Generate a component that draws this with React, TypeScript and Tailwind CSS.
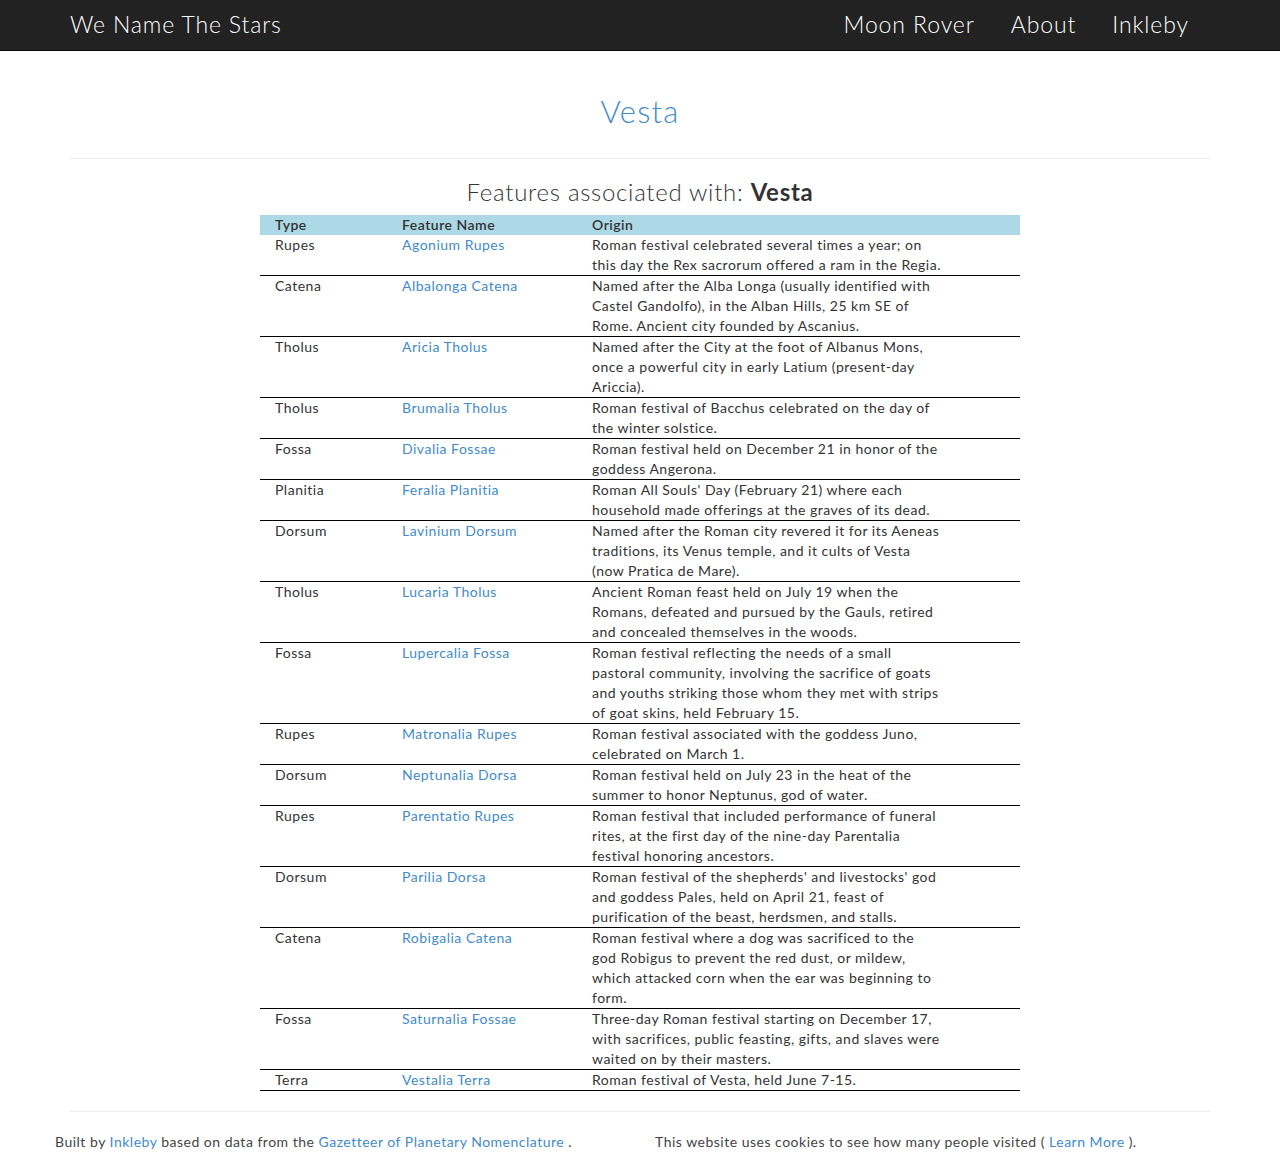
import React from "react";

type Row = { type: string; name: string; lines: string[] };

const rows: Row[] = [
  { type: "Rupes", name: "Agonium Rupes", lines: ["Roman festival celebrated several times a year; on", "this day the Rex sacrorum offered a ram in the Regia."] },
  { type: "Catena", name: "Albalonga Catena", lines: ["Named after the Alba Longa (usually identified with", "Castel Gandolfo), in the Alban Hills, 25 km SE of", "Rome. Ancient city founded by Ascanius."] },
  { type: "Tholus", name: "Aricia Tholus", lines: ["Named after the City at the foot of Albanus Mons,", "once a powerful city in early Latium (present-day", "Ariccia)."] },
  { type: "Tholus", name: "Brumalia Tholus", lines: ["Roman festival of Bacchus celebrated on the day of", "the winter solstice."] },
  { type: "Fossa", name: "Divalia Fossae", lines: ["Roman festival held on December 21 in honor of the", "goddess Angerona."] },
  { type: "Planitia", name: "Feralia Planitia", lines: ["Roman All Souls' Day (February 21) where each", "household made offerings at the graves of its dead."] },
  { type: "Dorsum", name: "Lavinium Dorsum", lines: ["Named after the Roman city revered it for its Aeneas", "traditions, its Venus temple, and it cults of Vesta", "(now Pratica de Mare)."] },
  { type: "Tholus", name: "Lucaria Tholus", lines: ["Ancient Roman feast held on July 19 when the", "Romans, defeated and pursued by the Gauls, retired", "and concealed themselves in the woods."] },
  { type: "Fossa", name: "Lupercalia Fossa", lines: ["Roman festival reflecting the needs of a small", "pastoral community, involving the sacrifice of goats", "and youths striking those whom they met with strips", "of goat skins, held February 15."] },
  { type: "Rupes", name: "Matronalia Rupes", lines: ["Roman festival associated with the goddess Juno,", "celebrated on March 1."] },
  { type: "Dorsum", name: "Neptunalia Dorsa", lines: ["Roman festival held on July 23 in the heat of the", "summer to honor Neptunus, god of water."] },
  { type: "Rupes", name: "Parentatio Rupes", lines: ["Roman festival that included performance of funeral", "rites, at the first day of the nine-day Parentalia", "festival honoring ancestors."] },
  { type: "Dorsum", name: "Parilia Dorsa", lines: ["Roman festival of the shepherds' and livestocks' god", "and goddess Pales, held on April 21, feast of", "purification of the beast, herdsmen, and stalls."] },
  { type: "Catena", name: "Robigalia Catena", lines: ["Roman festival where a dog was sacrificed to the", "god Robigus to prevent the red dust, or mildew,", "which attacked corn when the ear was beginning to", "form."] },
  { type: "Fossa", name: "Saturnalia Fossae", lines: ["Three-day Roman festival starting on December 17,", "with sacrifices, public feasting, gifts, and slaves were", "waited on by their masters."] },
  { type: "Terra", name: "Vestalia Terra", lines: ["Roman festival of Vesta, held June 7-15."] },
];

export default function App() {
  return (
    <div className="min-h-[1172px] bg-white text-[#333] text-[14px] leading-[20px] tracking-[0.5px]" style={{ fontFamily: "Lato, 'Open Sans', sans-serif" }}>
      <nav className="h-[51px] bg-[#222] border-b border-[#080808]">
        <div className="w-[1140px] mx-auto h-[50px] flex items-center justify-between">
          <a className="text-white text-[23px] font-light tracking-[0.85px] pb-[2px]">We Name The Stars</a>
          <div className="flex items-center gap-[36px] pr-[21px] pb-[2px] text-white text-[23px] font-light tracking-[0.9px]">
            <a>Moon Rover</a>
            <a>About</a>
            <a>Inkleby</a>
          </div>
        </div>
      </nav>
      <div className="w-[1140px] mx-auto">
        <h1 className="text-center text-[31px] leading-[34px] font-light text-[#428bca] tracking-[1.2px] pt-[43px] pb-[30px]">Vesta</h1>
        <hr className="border-0 border-t border-[#eee]" />
        <h2 className="text-center text-[24px] leading-[26px] font-light text-[#333] tracking-[0.7px] mt-[20px] mb-[10px]">
          Features associated with: <span className="font-bold">Vesta</span>
        </h2>
        <table className="w-[760px] mx-auto border-collapse">
          <thead>
            <tr className="bg-[#add8e6]">
              <th className="w-[127px] text-left font-semibold pl-[15px] h-[20px]">Type</th>
              <th className="w-[190px] text-left font-semibold pl-[15px]">Feature Name</th>
              <th className="text-left font-semibold pl-[15px]">Origin</th>
            </tr>
          </thead>
          <tbody>
            {rows.map((r) => (
              <tr key={r.name} className="border-b border-black align-top">
                <td className="pl-[15px]">{r.type}</td>
                <td className="pl-[15px]"><a className="text-[#428bca]">{r.name}</a></td>
                <td className="pl-[15px]">
                  {r.lines.map((l, i) => (
                    <div key={i} className="whitespace-nowrap">{l}</div>
                  ))}
                </td>
              </tr>
            ))}
          </tbody>
        </table>
        <hr className="border-0 border-t border-[#eee] mt-[20px]" />
      </div>
      <footer className="w-[1200px] mx-auto grid grid-cols-2 pt-[20px] pb-[21px] text-[#444]">
        <div className="px-[15px]">
          Built by <a className="text-[#428bca]">Inkleby</a> based on data from the <a className="text-[#428bca]">Gazetteer of Planetary Nomenclature</a> .
        </div>
        <div className="px-[15px]">
          This website uses cookies to see how many people visited ( <a className="text-[#428bca]">Learn More</a> ).
        </div>
      </footer>
    </div>
  );
}
